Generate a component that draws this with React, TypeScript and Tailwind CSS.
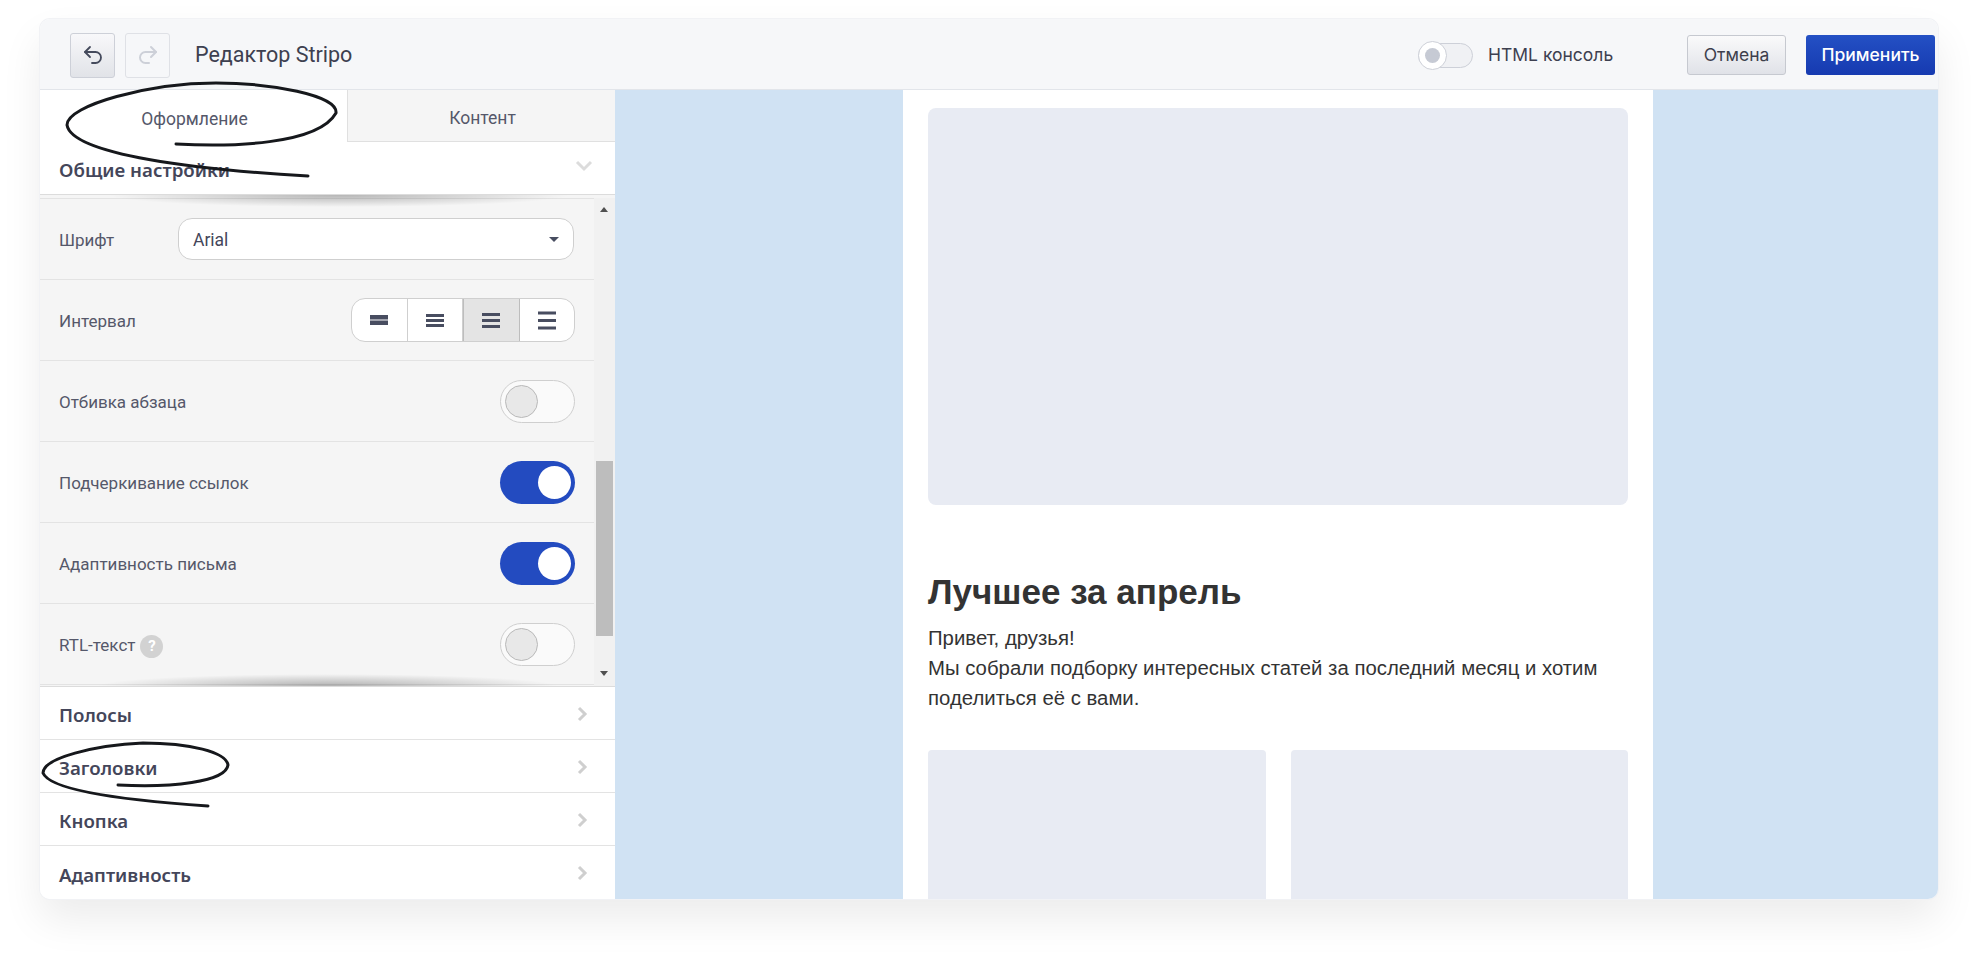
import { Redo2, Undo2 } from 'lucide-react';

const labelFont = "font-['Roboto',sans-serif]";
const titleFont = "font-['Noto_Sans',sans-serif]";

const ChevronRight = () => (
	<svg width="12" height="16" viewBox="0 0 12 16" fill="none" className="mr-[26px] mb-[4px]">
		<path d="M2 2l6 6-6 6" stroke="#cfcfcf" strokeWidth="3" />
	</svg>
);

const SectionRow = ({ title }: { title: string }) => (
	<div className="flex h-[53px] items-center justify-between border-b border-[#e3e3e3] pl-[19px] pt-[5px] last:border-b-0">
		<span className={`${titleFont} text-[18.7px] font-semibold text-[#44465a]`}>{title}</span>
		<ChevronRight />
	</div>
);

const Toggle = ({ on }: { on?: boolean }) =>
	on ? (
		<div className="flex h-[43px] w-[75px] items-center justify-end rounded-full bg-[#234bc0] pr-[4px]">
			<div className="h-[33px] w-[33px] rounded-full bg-white" />
		</div>
	) : (
		<div className="flex h-[43px] w-[75px] items-center rounded-full border border-[#cfcfcf] bg-[#fafafa] pl-[4px]">
			<div className="h-[33px] w-[33px] rounded-full border border-[#b9b9b9] bg-[#e8e8e8]" />
		</div>
	);

const SettingRow = ({ label, children }: { label: React.ReactNode; children: React.ReactNode }) => (
	<div className="flex h-[81px] items-center justify-between border-b border-[#e3e3e3] pl-[19px] pr-[19px]">
		<span className={`${labelFont} flex items-center gap-[5px] pt-[4px] text-[17px] text-[#55586a]`}>{label}</span>
		{children}
	</div>
);

const barSets = [
	{ ys: [4, 9.5], h: 4.5 },
	{ ys: [3, 8, 13], h: 3 },
	{ ys: [2, 8, 14], h: 3 },
	{ ys: [0.5, 8, 15.5], h: 3 },
];

const IntervalIcon = ({ ys, h }: { ys: number[]; h: number }) => (
	<svg width="18" height="19" viewBox="0 0 18 19">
		{ys.map(y => (
			<rect key={y} x="0" y={y} width="18" height={h} fill="#484d60" />
		))}
	</svg>
);

export default function App() {
	return (
		<div className="relative h-[959px] w-[1977px] overflow-hidden bg-white pl-[40px] pt-[19px]">
			<div className="flex h-[880px] w-[1898px] flex-col overflow-hidden rounded-[10px] bg-white shadow-[0_0_0_1px_#f1f2f5,0_20px_40px_rgba(0,0,0,0.08)]">
				<header className="flex h-[71px] shrink-0 items-center border-b border-[#e2e5ea] bg-[#f6f7f9] pl-[30px] pr-[3px] pt-[2px]">
					<button className="flex h-[45px] w-[45px] items-center justify-center rounded-[3px] border border-[#cdd0d8] bg-gradient-to-b from-[#f8f8fa] to-[#e1e3e8] text-[#444a5c]">
						<Undo2 size={24} strokeWidth={1.8} />
					</button>
					<button className="ml-[10px] flex h-[45px] w-[45px] items-center justify-center rounded-[3px] border border-[#dfe1e6] text-[#cdd0d8]">
						<Redo2 size={24} strokeWidth={2} />
					</button>
					<span className={`${labelFont} ml-[25px] text-[21.5px] text-[#3d4050]`}>Редактор Stripo</span>
					<div className="ml-auto flex items-center">
						<div className="relative h-[25px] w-[55px] rounded-full border border-[#cdd0d8] bg-[#f0f1f4]">
							<div className="absolute left-[-1px] top-[-3px] flex h-[29px] w-[29px] items-center justify-center rounded-full border border-[#cdd0d8] bg-white">
								<div className="h-[15px] w-[15px] rounded-full bg-[#c6cad4]" />
							</div>
						</div>
						<span className="ml-[15px] w-[199px] font-['Inter',sans-serif] text-[17.5px] text-[#3d4050]">HTML консоль</span>
						<button className="h-[40px] w-[99px] rounded-[3px] border border-[#c6c9d0] bg-gradient-to-b from-[#fafafb] to-[#e0e2e8] font-['Inter',sans-serif] text-[17.5px] text-[#3d3f4c]">
							Отмена
						</button>
						<button className="ml-[20px] h-[40px] w-[129px] rounded-[3px] bg-gradient-to-b from-[#2450c4] to-[#163ab0] font-['Inter',sans-serif] text-[17.5px] font-medium text-white">
							Применить
						</button>
					</div>
				</header>
				<div className="flex min-h-0 flex-1">
					<aside className="relative flex w-[575px] shrink-0 flex-col bg-white">
						<div className={`${labelFont} flex h-[52px] text-[17.5px] text-[#55586a]`}>
							<div className="flex w-[307px] items-center justify-center pl-[2px] pt-[6px]">Оформление</div>
							<div className="flex flex-1 items-center justify-center border-b border-l border-[#e0e0e0] bg-[#f5f5f5] pl-[2px] pt-[6px]">Контент</div>
						</div>
						<div className="flex h-[53px] items-center justify-between border-b border-[#dcdcdc] pl-[19px]">
							<span className={`${titleFont} pt-[4px] text-[18.7px] font-semibold text-[#44465a]`}>Общие настройки</span>
							<svg width="18" height="12" viewBox="0 0 18 12" fill="none" className="mr-[22px] mb-[4px]">
								<path d="M2 2l7 7 7-7" stroke="#dcdcdc" strokeWidth="3" />
							</svg>
						</div>
						<div className="relative flex h-[491px] shrink-0 bg-[#f5f5f5] pt-[3px]">
							<div className="min-w-0 flex-1 border-t border-[#e3e3e3]">
								<SettingRow label="Шрифт">
									<div className="mr-[1px] flex h-[42px] w-[396px] items-center justify-between rounded-[14px] border border-[#cfcfcf] bg-white pl-[14px] pr-[14px]">
										<span className={`${labelFont} pt-[2px] text-[17.5px] text-[#44465a]`}>Arial</span>
										<span className="h-0 w-0 border-x-[5px] border-t-[5px] border-x-transparent border-t-[#484d60]" />
									</div>
								</SettingRow>
								<SettingRow label="Интервал">
									<div className="flex h-[44px] w-[224px] overflow-hidden rounded-[14px] border border-[#cfcfcf] bg-white">
										{barSets.map((bars, i) => (
											<div
												key={i}
												className={
													i === 2
														? 'flex flex-1 items-center justify-center border-x border-[#bdbdbd] bg-[#e4e4e4]'
														: 'flex flex-1 items-center justify-center border-r border-[#cfcfcf] last:border-r-0'
												}
											>
												<IntervalIcon ys={bars.ys} h={bars.h} />
											</div>
										))}
									</div>
								</SettingRow>
								<SettingRow label="Отбивка абзаца">
									<Toggle />
								</SettingRow>
								<SettingRow label="Подчеркивание ссылок">
									<Toggle on />
								</SettingRow>
								<SettingRow label="Адаптивность письма">
									<Toggle on />
								</SettingRow>
								<SettingRow
									label={
										<>
											RTL-текст
											<span className="flex h-[23px] w-[23px] items-center justify-center rounded-full bg-[#d2d2d2] text-[15px] font-bold text-white">?</span>
										</>
									}
								>
									<Toggle />
								</SettingRow>
							</div>
							<div className="relative w-[21px] shrink-0 bg-[#f1f1f1]">
								<span className="absolute left-[6px] top-[9px] h-0 w-0 border-x-[4px] border-b-[5px] border-x-transparent border-b-[#505050]" />
								<div className="absolute left-[2px] top-[263px] h-[175px] w-[17px] bg-[#bdbdbd]" />
								<span className="absolute bottom-[10px] left-[6px] h-0 w-0 border-x-[4px] border-t-[5px] border-x-transparent border-t-[#505050]" />
							</div>
							<div className="absolute inset-x-0 top-0 h-[14px] bg-[radial-gradient(ellipse_230px_12px_at_52%_0%,rgba(0,0,0,0.26),transparent)]" />
							<div className="absolute inset-x-0 bottom-0 h-[14px] bg-[radial-gradient(ellipse_230px_12px_at_50%_100%,rgba(0,0,0,0.28),transparent)]" />
						</div>
						<div className="flex-1 border-t border-[#dcdcdc]">
							<SectionRow title="Полосы" />
							<SectionRow title="Заголовки" />
							<SectionRow title="Кнопка" />
							<SectionRow title="Адаптивность" />
						</div>
					</aside>
					<main className="flex flex-1 overflow-hidden bg-[#d0e2f3] pl-[288px]">
						<div className="h-full w-[750px] overflow-hidden bg-white px-[25px] pt-[18px] font-['Liberation_Sans',sans-serif]">
							<div className="h-[397px] rounded-[8px] bg-[#e8ebf3]" />
							<h1 className="mt-[67px] text-[35px] font-bold leading-[40px] text-[#333]">Лучшее за апрель</h1>
							<p className="mt-[11px] text-[20.35px] leading-[30px] text-[#333]">
								Привет, друзья!
								<br />
								Мы собрали подборку интересных статей за последний месяц и хотим поделиться её с вами.
							</p>
							<div className="mt-[37px] grid grid-cols-2 gap-[25px]">
								<div className="h-[200px] rounded-[4px] bg-[#e8ebf3]" />
								<div className="h-[200px] rounded-[4px] bg-[#e8ebf3]" />
							</div>
						</div>
					</main>
				</div>
			</div>
			<svg className="pointer-events-none absolute left-0 top-0" width="1977" height="959" fill="none" stroke="#16181c" strokeWidth="3" strokeLinecap="round">
				<path d="M176 144C230 147 318 145 336 113C338 95 270 83 216 83C150 83 67 105 67 125C72 155 200 170 308 176" />
				<path d="M118 785C170 788 226 782 228 765C226 752 190 743 143 743C95 745 43 758 43 773C50 790 120 800 208 806" />
			</svg>
		</div>
	);
}
